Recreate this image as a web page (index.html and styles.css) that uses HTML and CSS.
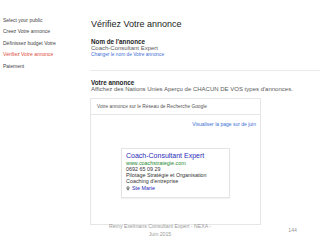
FILE: index.html
```html
<!DOCTYPE html>
<html lang="fr">
<head>
    <meta charset="utf-8">
    <title>Vérifiez Votre annonce</title>
    <link rel="stylesheet" href="styles.css">
</head>
<body>
    <div class="slide">
        <div class="top">
            <ul class="side">
                <li>Select your public</li>
                <li>Creez Votre annonce</li>
                <li>Définissez budget Votre</li>
                <li class="current">Vérifiez Votre annonce</li>
                <li>Paiement</li>
            </ul>
            <div class="main">
                <h1 class="title">Vérifiez Votre annonce</h1>
                <p class="label">Nom de l'annonce</p>
                <p class="sub">Coach-Consultant Expert</p>
                <a class="link">Changer le nom de Votre annonce</a>
                <div class="divider"></div>
                <p class="label">Votre annonce</p>
                <p class="sub">Affichez des Nations Unies Aperçu de CHACUN DE VOS types d'annonces.</p>
                <div class="preview">
                    <div class="previewHead">Votre annonce sur le Réseau de Recherche Google</div>
                    <div class="previewBody">
                        <a class="link view">Visualiser la page sur de juin</a>
                        <div class="ad">
                            <div class="adTitle">Coach-Consultant Expert</div>
                            <div class="adUrl">www.coachstrategie.com</div>
                            <div class="adLine">0692 65 09 29</div>
                            <div class="adLine">Pilotage Stratégie et Organisation</div>
                            <div class="adLine">Coaching d'entreprise</div>
                            <div class="adLine adPlace">
                                <svg width="4" height="5" viewBox="0 0 4 5">
                                    <path d="M2 0.2a1.6 1.6 0 0 1 1.6 1.6C3.6 3 2 4.8 2 4.8S0.4 3 0.4 1.8A1.6 1.6 0 0 1 2 0.2z" fill="#777"/>
                                    <circle cx="2" cy="1.8" r="0.6" fill="#fff"/>
                                </svg>
                                <span class="adTown">Ste Marie</span>
                            </div>
                        </div>
                    </div>
                </div>
            </div>
        </div>
        <div class="foot">
            <span></span>
            <span class="footTxt">Remy Exelmans Consultant Expert - NEXA -<br>Juin 2015</span>
            <span class="pageNo">144</span>
        </div>
    </div>
</body>
</html>
```

FILE: styles.css
```css
body {
    margin: 0;
    background: white;
    font-family: 'Liberation Sans', Arial, sans-serif;
    color: #333333;
}

.slide {
    width: 320px;
    height: 240px;
    overflow: hidden;
}

.top {
    display: flex;
}

.side {
    width: 87px;
    margin: 0;
    padding: 15px 0 0 3px;
    list-style: none;
    font-size: 5px;
    line-height: 11.4px;
    color: #444444;
}

.side .current {
    color: #dd4b39;
}

.main {
    flex: 1;
    padding-top: 18px;
}

.title {
    margin: 0 0 9px 1px;
    font-size: 9px;
    line-height: 12px;
    font-weight: normal;
    color: #222222;
}

.label {
    margin: 0 0 0 1px;
    font-size: 6.3px;
    line-height: 6px;
    font-weight: bold;
    color: #222222;
}

.sub {
    margin: 0 0 0 1px;
    font-size: 6px;
    line-height: 6px;
    color: #5a5a5a;
}

.link {
    display: block;
    margin: 1px 0 0 1px;
    font-size: 4.8px;
    line-height: 6px;
    color: #3b6fd4;
}

.divider {
    margin: 12px 0 9px 0;
    border-top: 1px solid #ebebeb;
}

.preview {
    width: 169px;
    height: 125px;
    margin-top: 6px;
    border: 1px solid #e6e6e6;
}

.previewHead {
    height: 15px;
    padding-left: 6px;
    font-size: 4.8px;
    line-height: 16px;
    color: #555555;
    border-bottom: 1px solid #e6e6e6;
}

.previewBody {
    padding: 6px 4px 0 30px;
}

.view {
    margin: 0;
    text-align: right;
    font-size: 5px;
}

.ad {
    width: 103px;
    height: 45px;
    margin-top: 21px;
    padding: 3px 0 0 4px;
    border: 1px solid #e4e4e4;
    box-shadow: 0 1px 1px rgba(0, 0, 0, 0.05);
    font-size: 5.4px;
    line-height: 6px;
}

.adTitle {
    font-size: 7px;
    line-height: 8px;
    color: #2a2ab8;
}

.adUrl {
    color: #1e8a32;
}

.adLine {
    color: #333333;
}

.adPlace {
    display: flex;
    align-items: center;
    gap: 2px;
    margin-top: 1px;
}

.adTown {
    color: #2a2ab8;
}

.foot {
    display: grid;
    grid-template-columns: 1fr auto 1fr;
    align-items: center;
    margin-top: -3px;
    font-size: 5.2px;
    line-height: 8px;
    color: #9a9a9a;
}

.footTxt {
    text-align: center;
}

.pageNo {
    justify-self: end;
    padding-right: 23px;
}
```
